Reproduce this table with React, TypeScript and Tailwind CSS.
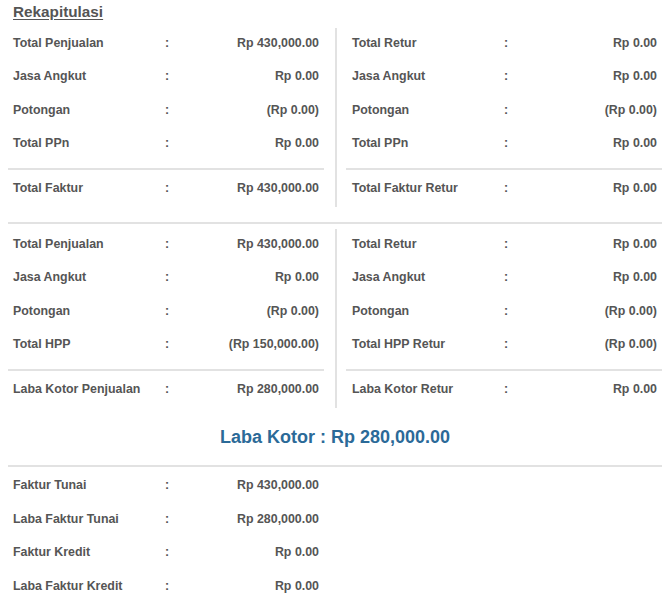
import React from 'react';

type Item = { label: string; value: string };

const penjualan1: Item[] = [
  { label: 'Total Penjualan', value: 'Rp 430,000.00' },
  { label: 'Jasa Angkut', value: 'Rp 0.00' },
  { label: 'Potongan', value: '(Rp 0.00)' },
  { label: 'Total PPn', value: 'Rp 0.00' },
];
const retur1: Item[] = [
  { label: 'Total Retur', value: 'Rp 0.00' },
  { label: 'Jasa Angkut', value: 'Rp 0.00' },
  { label: 'Potongan', value: '(Rp 0.00)' },
  { label: 'Total PPn', value: 'Rp 0.00' },
];
const penjualan2: Item[] = [
  { label: 'Total Penjualan', value: 'Rp 430,000.00' },
  { label: 'Jasa Angkut', value: 'Rp 0.00' },
  { label: 'Potongan', value: '(Rp 0.00)' },
  { label: 'Total HPP', value: '(Rp 150,000.00)' },
];
const retur2: Item[] = [
  { label: 'Total Retur', value: 'Rp 0.00' },
  { label: 'Jasa Angkut', value: 'Rp 0.00' },
  { label: 'Potongan', value: '(Rp 0.00)' },
  { label: 'Total HPP Retur', value: '(Rp 0.00)' },
];
const faktur: Item[] = [
  { label: 'Faktur Tunai', value: 'Rp 430,000.00' },
  { label: 'Laba Faktur Tunai', value: 'Rp 280,000.00' },
  { label: 'Faktur Kredit', value: 'Rp 0.00' },
  { label: 'Laba Faktur Kredit', value: 'Rp 0.00' },
];

function Row({ item, variant }: { item: Item; variant: 'top' | 'total' | 'bottom' }) {
  const size =
    variant === 'total' ? 'h-[37px]' : variant === 'top' ? 'h-[33.5px] pb-[3px]' : 'h-[33.5px] pt-[4px]';
  return (
    <div className={`flex items-center pl-[5px] pr-[5px] ${size}`}>
      <span className="w-[152px] shrink-0">{item.label}</span>
      <span>:</span>
      <span className="flex-1 text-right">{item.value}</span>
    </div>
  );
}

function Column({ items, total, right }: { items: Item[]; total: Item; right?: boolean }) {
  return (
    <div className={right ? 'border-l-2 border-[#e2e2e2] pl-[9px]' : 'pr-[11px]'}>
      <div className={right ? 'pl-[1px]' : ''}>
        {items.map((item) => (
          <Row key={item.label} item={item} variant="top" />
        ))}
      </div>
      <div className="mt-[6px] h-[2px] bg-[#e2e2e2]" />
      <div className={right ? 'pl-[1px]' : ''}>
        <Row item={total} variant="total" />
      </div>
    </div>
  );
}

export default function App() {
  return (
    <div
      className="bg-white pl-[8px] pr-[5px] text-[12.4px] font-bold text-[#555] min-h-[600px]"
      style={{ fontFamily: '"Liberation Sans", Arial, sans-serif' }}
    >
      <div className="h-[28px] pl-[5px] pt-[1px]">
        <span className="text-[15.3px] underline underline-offset-2">Rekapitulasi</span>
      </div>

      <div className="grid grid-cols-2">
        <Column items={penjualan1} total={{ label: 'Total Faktur', value: 'Rp 430,000.00' }} />
        <Column items={retur1} total={{ label: 'Total Faktur Retur', value: 'Rp 0.00' }} right />
      </div>

      <div className="mt-[15px] h-[2px] bg-[#e2e2e2]" />

      <div className="mt-[5px] grid grid-cols-2">
        <Column items={penjualan2} total={{ label: 'Laba Kotor Penjualan', value: 'Rp 280,000.00' }} />
        <Column items={retur2} total={{ label: 'Laba Kotor Retur', value: 'Rp 0.00' }} right />
      </div>

      <div className="flex h-[57px] items-center justify-center pt-[2px] text-[18px] text-[#2b6a98]">
        Laba Kotor : Rp 280,000.00
      </div>

      <div className="h-[2px] bg-[#e2e2e2]" />

      <div className="grid grid-cols-2">
        <div className="pr-[11px]">
          {faktur.map((item) => (
            <Row key={item.label} item={item} variant="bottom" />
          ))}
        </div>
      </div>
    </div>
  );
}
